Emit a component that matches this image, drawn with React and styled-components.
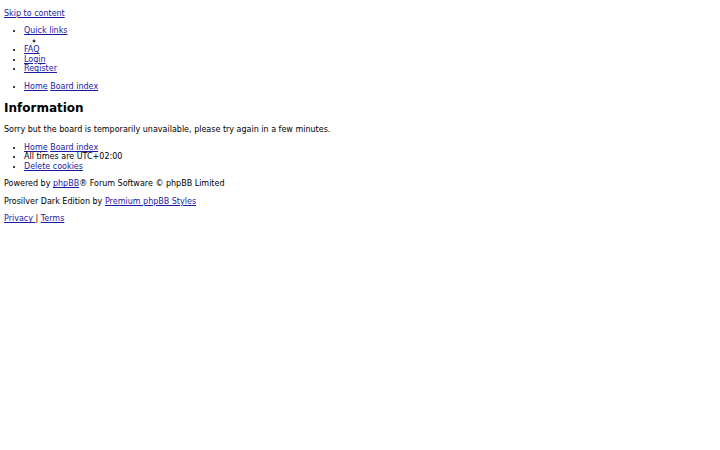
import React from "react";
import styled, { createGlobalStyle } from "styled-components";

const GlobalStyle = createGlobalStyle`
  html, body {
    margin: 0;
    background: #ffffff;
  }
  body {
    padding: 8.75px 4px 4px;
    font-family: "DejaVu Sans", Verdana, sans-serif;
    font-size: 8px;
    line-height: 9.5px;
    color: #000000;
  }
`;

const Page = styled.div`
  display: block;
`;

const SkipRow = styled.div`
  margin: 0;
`;

const TextLink = styled.a`
  color: #1a1aa6;
  text-decoration: underline;
  text-underline-offset: 1px;
`;

const List = styled.ul`
  margin: ${(p) => (p.nested ? "0" : "8px 0")};
  padding-left: 20px;
  list-style-type: ${(p) => (p.nested ? "circle" : "disc")};
`;

const Item = styled.li`
  line-height: 9.5px;
`;

const Heading = styled.h2`
  margin: 10px 0;
  font-size: 12px;
  line-height: 14px;
  font-weight: bold;
`;

const Para = styled.p`
  margin: 8px 0;
`;

export default function App() {
  return (
    <>
      <GlobalStyle />
      <Page>
        <SkipRow>
          <TextLink href="#">Skip to content</TextLink>
        </SkipRow>
        <List>
          <Item>
            <TextLink href="#">Quick links</TextLink>
            <List nested>
              <Item>&nbsp;</Item>
            </List>
          </Item>
          <Item>
            <TextLink href="#">FAQ</TextLink>
          </Item>
          <Item>
            <TextLink href="#">Login</TextLink>
          </Item>
          <Item>
            <TextLink href="#">Register</TextLink>
          </Item>
        </List>
        <List>
          <Item>
            <TextLink href="#">Home</TextLink> <TextLink href="#">Board index</TextLink>
          </Item>
        </List>
        <Heading>Information</Heading>
        <Para>
          Sorry but the board is temporarily unavailable, please try again in a few minutes.
        </Para>
        <List>
          <Item>
            <TextLink href="#">Home</TextLink> <TextLink href="#">Board index</TextLink>
          </Item>
          <Item>All times are UTC+02:00</Item>
          <Item>
            <TextLink href="#">Delete cookies</TextLink>
          </Item>
        </List>
        <Para>
          Powered by <TextLink href="#">phpBB</TextLink>® Forum Software © phpBB Limited
        </Para>
        <Para>
          Prosilver Dark Edition by <TextLink href="#">Premium phpBB Styles</TextLink>
        </Para>
        <Para>
          <TextLink href="#">Privacy </TextLink>| <TextLink href="#">Terms</TextLink>
        </Para>
      </Page>
    </>
  );
}
